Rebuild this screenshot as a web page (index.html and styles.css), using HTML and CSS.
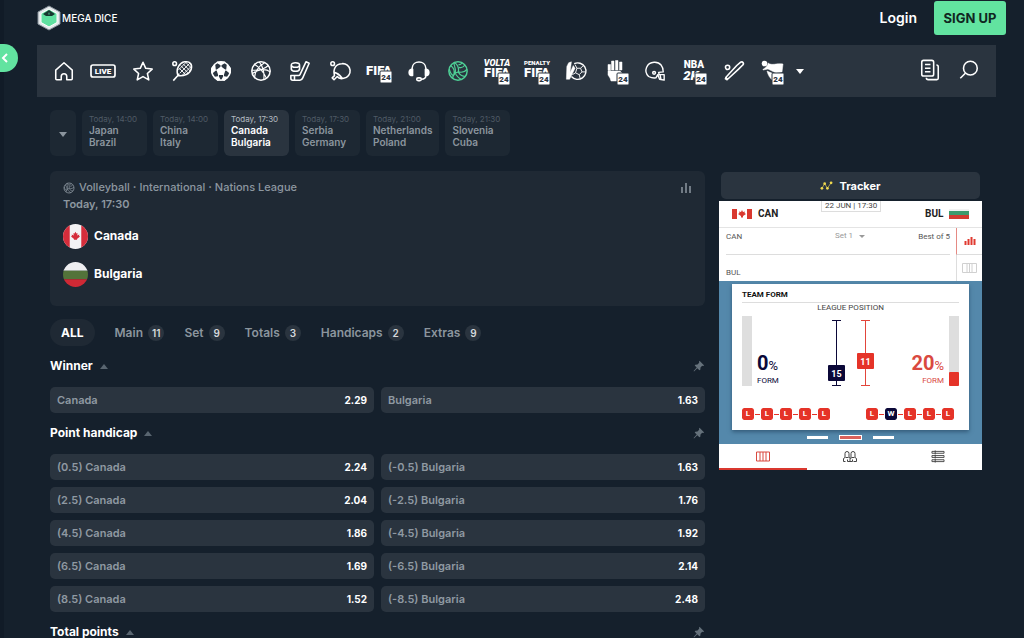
FILE: index.html
```html
<!DOCTYPE html>
<html lang="en">
<head>
<meta charset="utf-8">
<meta name="viewport" content="width=device-width, initial-scale=1">
<title>Mega Dice</title>
<link rel="stylesheet" href="styles.css">
</head>
<body>
<svg class="defs" aria-hidden="true">
  <symbol id="pin" viewBox="0 0 12 12"><path d="M6.500.8 11.200 5.500 10 6 9.200 5.800 7.500 7.500 7.300 9.800 6.400 10.300 4.300 8.200 1 11.500.6 11 3.700 7.600 1.700 5.600 2.300 4.800 4.500 4.500 6.200 2.800 6 1.800Z" fill="currentColor"/></symbol>
  <symbol id="volley" viewBox="0 0 24 24"><g fill="none" stroke="currentColor" stroke-width="1.300"><circle cx="12" cy="12" r="10" stroke-width="1.600"/><path d="M12.500 13C13 8 12 5 8 2.800M12.500 13c4 1 7.500-.5 9.500-3M12.500 13c-4 1-6 3.500-6.500 7.300M4 6c3 2 4.500 6 3.500 10.500M8 2.800c-1 1 0 2 .5 4.700 1 3 1 5 .5 7.500M13 8c3 1 5 0 6.500-2.500M12.500 5C14 5.500 15.500 4.500 16.500 3M9.500 15.500c2 3 4 5 6.500 6M12.500 13.500c2 3 4.500 4.500 7.500 4.500M2.500 10c1 4 2 6 4.500 7"/></g></symbol>
</svg>

<button class="drawer" aria-label="Open sidebar"><svg viewBox="0 0 10 12"><path d="M7 2 3 6l4 4" fill="none" stroke="#fff" stroke-width="2"/></svg></button>

<header class="top">
  <a class="brand" href="#" aria-label="Mega Dice">
    <svg viewBox="0 0 24 26"><path d="M12 1 23 7v12l-11 6L1 19V7Z" fill="#e4e8eb" stroke="#87919a"/><path d="m12 4 8 4.500v9L12 22l-8-4.500v-9Z" fill="#5fe0a0" stroke="#fff"/><path d="m12 5 6 4-3 2H9L6 9Z" fill="#17372f"/><path d="m12 7 1 2-1 1-1-1Z" fill="#3c8e70"/></svg>
    <span>MEGA DICE</span>
  </a>
  <a class="login" href="#">Login</a>
  <button class="signup">SIGN UP</button>
</header>

<nav class="sports" aria-label="Sports">
  <ul>
    <li><a href="#" aria-label="Home"><svg viewBox="0 0 24 24"><path d="M3 11 12 3l9 8v9.500q0 1-1 1h-5V18a3 3 0 0 0-6 0v3.500H4q-1 0-1-1Z"/></svg></a></li>
    <li><a href="#" aria-label="Live"><svg class="wide" viewBox="0 0 26 16"><rect x="1" y="2" width="24" height="12" rx="2"/><text x="13" y="11" class="t-live">LIVE</text></svg></a></li>
    <li><a href="#" aria-label="Favourites"><svg viewBox="0 0 24 24"><path d="m12 2.500 3 6.600 7 .8-5.200 4.800 1.500 7-6.300-3.600-6.300 3.600 1.500-7L2 9.900l7-.8Z"/></svg></a></li>
    <li><a href="#" aria-label="Tennis"><svg viewBox="0 0 24 24"><path d="M7.500 17C5 10 9 3 15 2c6-1 8.500 3 7 8s-8 8-14.500 7ZM7.500 17l-5 5.500M7.500 15l1.500 2"/><path stroke-width="1" d="m9 9 7 7M10.500 6 18.500 14M13 4l8 8M16 2.500l6 6M12 17 22 7M9.500 14.500 20.500 3.500M8 11l9-9"/><circle cx="4" cy="4" r="2"/></svg></a></li>
    <li><a href="#" aria-label="Football"><svg viewBox="0 0 24 24"><circle cx="12" cy="12" r="10"/><path fill="currentColor" d="m12 8 4 3-1.500 4.500h-5L8 11ZM8 2.500h8L12 5ZM2 9l3-3 .5 5L2 14ZM22 9l-3-3-.5 5 3.500 3ZM5 19l4-.5 1.500 3-2 .5ZM19 19l-4-.5-1.500 3 2 .5Z"/><path stroke-width="1" d="M12 8V5M16 11l2.500 0M8 11H5.500M9.500 15.500l-.5 3M14.500 15.500l.5 3"/></svg></a></li>
    <li><a href="#" aria-label="Basketball"><svg viewBox="0 0 24 24"><circle cx="12" cy="12" r="10"/><path stroke-width="1.200" d="M2 11c8 1 15-2 18-5M10 2c4 4 6 12 5 19.500M16 3C10 6 5 13 5 19M2.500 15C9 10 17 9 22 13M5 5c4 2 10 8 13 15"/></svg></a></li>
    <li><a href="#" aria-label="Ice hockey"><svg viewBox="0 0 24 24"><path d="m18.500 2 3.500 1.500-7 16q-1 2.500-3 2.500H4q-2 0-2-2v-3h8.500q1 0 1.500-1ZM6 17v5"/><ellipse cx="7" cy="5.500" rx="4.500" ry="2.500"/><path d="M2.500 6v4c1 3 8 3 9 0V6"/></svg></a></li>
    <li><a href="#" aria-label="Table tennis"><svg viewBox="0 0 24 24"><path d="M6 17C4 9 8 4 14 4a8 8 0 0 1 2 16c-4 1-6-.5-7-2l-3.500 3.500-2-2L6 17ZM5.500 13.500c5 1 7 4 9 6.500"/><circle cx="4" cy="4" r="2"/></svg></a></li>
    <li><a href="#" aria-label="FIFA 24"><svg class="txt" viewBox="0 0 28 28"><text x="14" y="18" class="t-big">FIFA</text><rect class="tag" x="15" y="14" width="12" height="12" rx="1"/><text x="21" y="23" class="t-24">24</text></svg></a></li>
    <li><a href="#" aria-label="Esports"><svg viewBox="0 0 24 24"><path d="M4.500 11V9C5 0 19 0 19.500 9v2M19.500 17c0 3-2 4-5 4"/><path fill="currentColor" d="M5 10v7c-5 0-5-7 0-7ZM19 10v7c5 0 5-7 0-7Z"/><rect x="9.500" y="19.500" width="5" height="3" rx="1.500"/></svg></a></li>
    <li><a class="current" href="#" aria-label="Volleyball" aria-current="page"><svg viewBox="0 0 24 24"><use href="#volley"/></svg></a></li>
    <li><a href="#" aria-label="Volta FIFA 24"><svg class="txt" viewBox="0 0 28 28"><text x="14" y="9" class="t-small slant">VOLTA</text><text x="14" y="20" class="t-big">FIFA</text><rect class="tag" x="15" y="16" width="12" height="12" rx="1"/><text x="21" y="25" class="t-24">24</text></svg></a></li>
    <li><a href="#" aria-label="Penalty FIFA 24"><svg class="txt" viewBox="0 0 28 28"><text x="14" y="8" class="t-tiny">PENALTY</text><text x="14" y="20" class="t-big">FIFA</text><rect class="tag" x="15" y="16" width="12" height="12" rx="1"/><text x="21" y="25" class="t-24">24</text></svg></a></li>
    <li><a href="#" aria-label="Futsal"><svg viewBox="0 0 24 24"><path stroke-width="1.500" d="M10 4a9 9 0 1 1-3 14"/><path stroke-width="1" d="m13 9 4 0 1.500 4-3 3-4-2ZM13 9l-2-4M17 9l3-3M18.500 13H22M15.500 16l1 4M11.500 14 8 16"/><path fill="currentColor" stroke-width=".5" d="M2 7 1.500 21H5L11 9 9 6 5.500 14 7 2 4 3Z"/></svg></a></li>
    <li><a href="#" aria-label="Combat 24"><svg class="txt" viewBox="0 0 28 28"><path fill="currentColor" d="M6 7.500h2.500v6H6ZM9.500 4H12v9H9.500ZM13.500 3.500H16V13h-2.500ZM17.500 5H20v8h-2.500ZM6 14h12l2 2v4l-4 4H9l-1-3-2-3Z" stroke-width=".5"/><rect class="tag" x="15" y="16" width="12" height="12" rx="1"/><text x="21" y="25" class="t-24">24</text></svg></a></li>
    <li><a href="#" aria-label="American football"><svg viewBox="0 0 24 24"><path stroke-width="1.500" d="M5 18C-1 12 3 3 11 2.500c7-.5 10 5 10 10.500l-5 .5.500 2.500h5.500v6l-5-1-2-5-2 3.500c-3 .5-5 0-8-1.500ZM17.500 16l1 5"/><circle cx="11" cy="14" r="1.500"/></svg></a></li>
    <li><a href="#" aria-label="NBA 2K24"><svg class="txt" viewBox="0 0 28 28"><text x="14" y="11" class="t-nba">NBA</text><text x="11" y="23" class="t-big slant">2K</text><rect class="tag" x="15" y="16" width="12" height="12" rx="1"/><text x="21" y="25" class="t-24">24</text></svg></a></li>
    <li><a href="#" aria-label="Baseball"><svg viewBox="0 0 24 24"><path d="m3 19 12-13 4-3.500q2-1 3 .500 1 1.500-1 3l-4 4L5 21ZM2 20l3 2"/><circle cx="5" cy="8" r="2.300"/></svg></a></li>
    <li><a href="#" aria-label="eCricket 24"><svg class="txt" viewBox="0 0 28 28"><path fill="currentColor" stroke-width=".5" d="M9 6c4 3 8 0 15 1l-1 8-6 1-8-4-5 1c0-2 3-1 5-6ZM8 14l7 3v7c-4-2-6-6-7-10Z"/><circle fill="currentColor" cx="5.500" cy="6.500" r="2"/><rect class="tag" x="13" y="16" width="12" height="12" rx="1"/><text x="19" y="25" class="t-24">24</text></svg></a></li>
  </ul>
  <button class="more" aria-label="More sports"><i class="down"></i></button>
  <button class="tool" aria-label="Bet slips"><svg viewBox="0 0 24 24"><rect x="3" y="1.500" width="13" height="17" rx="2"/><path d="M6.500 6h6M6.500 10h6M6.500 14h6M19 6.500q2 0 2 2V21q0 1.500-1.500 1.500H10q-2 0-2-2"/></svg></button>
  <button class="tool" aria-label="Search"><svg viewBox="0 0 24 24"><circle cx="13.500" cy="10" r="7.500"/><path d="M8 15.500 2.500 21"/></svg></button>
</nav>

<main class="page">
  <nav class="matches" aria-label="Matches">
    <button class="match pick" aria-label="Choose league"><i class="down"></i></button>
    <a class="match" href="#"><small>Today, 14:00</small>Japan<br>Brazil</a>
    <a class="match" href="#"><small>Today, 14:00</small>China<br>Italy</a>
    <a class="match active" href="#"><small>Today, 17:30</small>Canada<br>Bulgaria</a>
    <a class="match" href="#"><small>Today, 17:30</small>Serbia<br>Germany</a>
    <a class="match" href="#"><small>Today, 21:00</small>Netherlands<br>Poland</a>
    <a class="match" href="#"><small>Today, 21:30</small>Slovenia<br>Cuba</a>
  </nav>

  <div class="columns">
    <div class="event">
      <section class="card">
        <div class="crumbs"><svg viewBox="0 0 24 24"><use href="#volley"/></svg><a href="#">Volleyball</a><b>·</b><a href="#">International</a><b>·</b><a href="#">Nations League</a>
          <button aria-label="Statistics"><svg viewBox="0 0 12 12"><path d="M2 5v6M6 1v10M10 4v7" stroke="currentColor" stroke-width="1.500"/></svg></button></div>
        <p class="when">Today, 17:30</p>
        <div class="team"><svg viewBox="0 0 26 26"><clipPath id="disc"><circle cx="13" cy="13" r="13"/></clipPath><g clip-path="url(#disc)"><path fill="#f3f3f5" d="M0 0h26v26H0z"/><path fill="#d52d3b" d="M0 0h7v26H0zM19 0h7v26h-7zM13 8l1 2 1.200-.500-.4 2.500 2.200-1-.3 1.500 1 .500-3.200 2.500.2 1h-3.400l.2-1L8.300 13l1-.500L9 11l2.200 1-.4-2.500L12 10Z"/></g></svg><h2>Canada</h2></div>
        <div class="team"><svg viewBox="0 0 26 26"><g clip-path="url(#disc)"><path fill="#eeeef1" d="M0 0h26v9H0z"/><path fill="#53733a" d="M0 9h26v9H0z"/><path fill="#cf2935" d="M0 18h26v8H0z"/></g></svg><h2>Bulgaria</h2></div>
      </section>

      <div class="tabs">
        <button class="all">ALL</button>
        <button>Main<span>11</span></button>
        <button>Set<span>9</span></button>
        <button>Totals<span>3</span></button>
        <button>Handicaps<span>2</span></button>
        <button>Extras<span>9</span></button>
      </div>

      <section class="market">
        <header><button class="fold">Winner<i class="up"></i></button><button class="pin" aria-label="Pin Winner"><svg><use href="#pin"/></svg></button></header>
        <div class="odds">
          <button><span>Canada</span><b>2.29</b></button><button><span>Bulgaria</span><b>1.63</b></button>
        </div>
      </section>
      <section class="market">
        <header><button class="fold">Point handicap<i class="up"></i></button><button class="pin" aria-label="Pin Point handicap"><svg><use href="#pin"/></svg></button></header>
        <div class="odds">
          <button><span>(0.5) Canada</span><b>2.24</b></button><button><span>(-0.5) Bulgaria</span><b>1.63</b></button>
          <button><span>(2.5) Canada</span><b>2.04</b></button><button><span>(-2.5) Bulgaria</span><b>1.76</b></button>
          <button><span>(4.5) Canada</span><b>1.86</b></button><button><span>(-4.5) Bulgaria</span><b>1.92</b></button>
          <button><span>(6.5) Canada</span><b>1.69</b></button><button><span>(-6.5) Bulgaria</span><b>2.14</b></button>
          <button><span>(8.5) Canada</span><b>1.52</b></button><button><span>(-8.5) Bulgaria</span><b>2.48</b></button>
        </div>
      </section>
      <section class="market">
        <header><button class="fold">Total points<i class="up"></i></button><button class="pin" aria-label="Pin Total points"><svg><use href="#pin"/></svg></button></header>
      </section>
    </div>

    <aside class="tracker">
      <h3><svg viewBox="0 0 14 12"><path d="m2 9 3-5 3 5 4-6" fill="none" stroke="#b8a94a"/><g fill="#f0d94f"><circle cx="2" cy="9" r="1.500"/><circle cx="5" cy="4" r="1.500"/><circle cx="8" cy="9" r="1.500"/><circle cx="12" cy="3" r="1.500"/></g></svg>Tracker</h3>
      <div class="widget">
        <div class="score">
          <svg viewBox="0 0 20 10"><path fill="#fff" d="M0 0h20v10H0z"/><path fill="#d9382f" d="M0 0h5v10H0zM15 0h5v10h-5zM10 1l1 2 2-.500-.5 1.500 1.500 1-3 2v1.500H9V7L6 5l1.500-1L7 2.500 9 3Z"/></svg>
          <strong>CAN</strong><time>22 JUN | 17:30</time><strong>BUL</strong>
          <svg viewBox="0 0 20 10"><path fill="#f2f2f2" d="M0 0h20v3H0z"/><path fill="#3d9b6d" d="M0 2h20v5H0z"/><path fill="#d23c31" d="M0 6h20v4H0z"/></svg>
        </div>
        <div class="sets">
          <div class="set-row first"><span>CAN</span><button class="set">Set 1<i class="down"></i></button><span class="best">Best of 5</span></div>
          <div class="set-row second"><span>BUL</span></div>
          <button class="side on" aria-label="Charts"><svg viewBox="0 0 12 10"><path d="M1.500 5v4M4.500 3v6M7.500 1v8M10.500 3v6" stroke="#e03a30" stroke-width="2"/></svg></button>
          <button class="side" aria-label="Court"><svg class="court" viewBox="0 0 15 10"><path d="M.5.5h14v9H.5zM5 .5v9M7.500.5v9M10 .5v9" fill="none" stroke="#d0d0d0"/></svg></button>
        </div>
        <div class="stage">
          <div class="form-card">
            <h4>TEAM FORM</h4>
            <p>LEAGUE POSITION</p>
            <div class="form">
              <div class="meter"></div>
              <div class="pct navy"><span><b>0</b>%</span><small>FORM</small></div>
              <svg class="position" viewBox="0 0 48 66"><g stroke="#0b0838" fill="none"><path d="M5 .5h9M5 65.500h9M9.500 0v66"/></g><rect x="1" y="45" width="17" height="16" rx="1" fill="#0b0838"/><text x="9.500" y="57">15</text><g stroke="#e2453b" fill="none"><path d="M34 .5h9M34 65.500h9M38.500 0v66"/></g><rect x="30" y="33" width="17" height="16" rx="1" fill="#e53328"/><text x="38.500" y="45">11</text></svg>
              <div class="pct red"><span><b>20</b>%</span><small>FORM</small></div>
              <div class="meter"><i style="height:20%"></i></div>
            </div>
            <div class="results">
              <ol><li>L</li><li>L</li><li>L</li><li>L</li><li>L</li></ol>
              <ol><li>L</li><li class="win">W</li><li>L</li><li>L</li><li>L</li></ol>
            </div>
          </div>
          <div class="dots"><button aria-label="Slide 1"></button><button class="on" aria-label="Slide 2"></button><button aria-label="Slide 3"></button></div>
        </div>
        <div class="views">
          <button class="on" aria-label="Court view"><svg viewBox="0 0 14 12"><path d="M.5 1.500h13v9H.5zM4 1.500v9M7 1.500v9M10 1.500v9" fill="none" stroke="currentColor"/></svg></button>
          <button aria-label="Head to head"><svg viewBox="0 0 14 12"><path d="M.5 11V8L2 7V3q0-2 2-2t2 2v4l2 1V3q0-2 2-2t2 2v4l1.500 1v3h-3M.5 11h2M4.500 11h5M2.500 7h3M8.500 7h3M7 8v3M4.500 9v2M9.500 9v2" fill="none" stroke="currentColor"/></svg></button>
          <button aria-label="Statistics view"><svg viewBox="0 0 14 14"><path d="M.5 1.500h13v2H.5zM.5 6h13v2H.5zM.5 10.500h13v2H.5zM4 .5v4M4 5v4M4 9.500v4" fill="none" stroke="currentColor"/></svg></button>
        </div>
      </div>
    </aside>
  </div>
</main>
</body>
</html>
```
FILE: styles.css
```css
* { box-sizing: border-box; }
body { margin: 0; background: #15202c; color: #fff; font: 600 11px/16px Inter, "Noto Sans", sans-serif; border-left: 4px solid #111b27; overflow-x: hidden; }
h2, h3, h4, p, ul, ol { margin: 0; padding: 0; }
ul, ol { list-style: none; }
button { font: inherit; color: inherit; background: none; border: 0; padding: 0; cursor: pointer; }
a { color: inherit; text-decoration: none; }
.defs { display: none; }
.down { display: inline-block; border: 4px solid transparent; border-top: 5px solid; border-bottom: 0; }
.up { display: inline-block; border: 4px solid transparent; border-bottom: 5px solid #596570; border-top: 0; }

.drawer { position: absolute; left: 0; top: 44px; width: 18px; height: 28px; border-radius: 0 14px 14px 0; background: #62e3a0; display: flex; align-items: center; }
.drawer svg { width: 10px; height: 12px; }

.top { display: flex; align-items: center; height: 45px; padding: 0 18px 9px 33px; }
.brand { display: flex; align-items: center; gap: 1px; margin-right: auto; font-weight: 500; }
.brand svg { width: 24px; height: 26px; }
.brand span { font-size: 10px; }
.login { font-size: 14px; margin-right: 17px; }
.signup { background: #62e3a0; color: #10261f; width: 72px; height: 34px; border-radius: 3px; font-size: 13px; font-weight: 700; }

.sports { display: flex; align-items: center; height: 52px; margin: 0 28px 0 33px; padding: 0 15px 0 7px; background: #2a343f; }
.sports ul { display: flex; flex: 0 1 749px; }
.sports li { flex: 1; display: flex; justify-content: center; }
.sports a { display: flex; align-items: center; justify-content: center; height: 28px; }
.sports svg { width: 22px; height: 22px; fill: none; stroke: currentColor; stroke-width: 1.7; stroke-linejoin: round; overflow: visible; }
.sports .wide { width: 26px; height: 16px; }
.sports .txt { width: 28px; height: 28px; }
.sports text { stroke: none; fill: #fff; text-anchor: middle; font-family: Roboto, sans-serif; font-weight: 900; }
.sports .t-live { font-size: 8px; }
.sports .t-big { font-size: 13px; }
.sports .t-small { font-size: 9px; }
.sports .t-tiny { font-size: 6px; }
.sports .t-nba { font-size: 10px; }
.sports .slant { font-style: italic; }
.sports .tag { fill: #fff; stroke: #2a343f; stroke-width: 1; }
.sports .t-24 { font-size: 8px; fill: #2a343f; }
.sports .current { color: #4ed096; }
.more { width: 14px; display: flex; justify-content: center; margin-right: auto; }
.tool { width: 24px; height: 24px; margin-left: 15px; }

.page { padding: 13px 42px 0 46px; }
.matches { display: flex; gap: 6px; margin-bottom: 15px; }
.match { height: 46px; padding: 4px 7px; border-radius: 6px; background: #1d2833; color: #8b959e; line-height: 12px; font-size: 10px; white-space: nowrap; }
.match small { display: block; height: 10px; font-size: 8px; line-height: 10px; font-weight: 400; color: #4f5a65; min-width: 51px; }
.match.active { background: #2a343f; color: #fff; }
.match.active small { color: #b4bbc1; }
.match.pick { width: 26px; padding: 0; }

.columns { display: grid; grid-template-columns: minmax(0, 1fr) 263px; gap: 14px; align-items: start; }
.card { background: #1f2934; border-radius: 6px; padding: 8px 13px 19px; color: #8d97a0; }
.crumbs { display: flex; align-items: center; gap: 3px; line-height: 17px; font-weight: 500; }
.crumbs > svg { width: 12px; height: 12px; margin-right: 1px; }
.crumbs button { margin-left: auto; height: 12px; }
.crumbs button svg { width: 12px; height: 12px; display: block; }
.when { line-height: 17px; margin-bottom: 10px; }
.team { display: flex; align-items: center; gap: 6px; color: #fff; height: 26px; }
.team + .team { margin-top: 12px; }
.team svg { width: 25px; height: 25px; }
.team h2 { font-size: 12px; font-weight: 700; }

.tabs { display: flex; align-items: center; gap: 20px; margin: 13px 0 11px; font-size: 12px; color: #8b959e; }
.tabs button { display: flex; align-items: center; gap: 5px; height: 27px; }
.tabs .all { background: #1f2934; color: #fff; border-radius: 14px; padding: 0 11px; font-weight: 700; }
.tabs span { min-width: 16px; height: 16px; padding: 0 4px; border-radius: 8px; background: #2a343f; color: #d5d9dc; font-size: 10px; line-height: 16px; text-align: center; }

.market { margin-bottom: 11px; }
.market header { display: flex; justify-content: space-between; align-items: center; height: 18px; margin-bottom: 12px; }
.fold { display: flex; align-items: center; gap: 7px; font-size: 12px; font-weight: 700; }
.pin { color: #65717b; height: 12px; }
.pin svg { width: 12px; height: 12px; display: block; }
.odds { display: grid; grid-template-columns: 1fr 1fr; gap: 7px; }
.odds button { display: flex; justify-content: space-between; align-items: center; height: 26px; padding: 0 7px; border-radius: 5px; background: #2a343f; }
.odds span { color: #8f99a2; }
.odds b { font-size: 10px; font-weight: 700; }

.tracker { padding-top: 1px; }
.tracker h3 { display: flex; justify-content: center; align-items: center; gap: 6px; height: 27px; margin: 0 2px 2px; border-radius: 5px; background: #2a343f; font-size: 11px; font-weight: 700; }
.tracker h3 svg { width: 13px; height: 11px; }
.widget { background: #fff; color: #222; font: 400 8px/10px Roboto, sans-serif; }
.score { display: grid; grid-template-columns: 20px 57px 1fr 18px 20px; column-gap: 6px; align-items: center; height: 27px; padding: 0 13px; border-bottom: 1px solid #e4e4e4; }
.score svg { width: 20px; height: 10px; }
.score strong { font-size: 10px; font-weight: 700; }
.score time { align-self: start; justify-self: start; border: 1px solid #ddd; border-top: 0; padding: 0 3px; white-space: nowrap; color: #444; }
.sets { display: grid; grid-template-columns: 1fr 26px; grid-template-rows: 27px 26px; }
.set-row { display: grid; grid-template-columns: 1fr auto 1fr; margin-left: 7px; color: #555; }
.first { border-bottom: 1px solid #ddd; padding-top: 3px; margin-right: 6px; align-items: start; }
.second { grid-row: 2; align-items: end; padding-bottom: 3px; }
.first > span { padding-top: 1px; }
.best { text-align: right; }
.set { display: flex; align-items: center; gap: 6px; color: #999; margin-left: 24px; }
.set .down { border-width: 3px 3px 0; }
.side { border-left: 1px solid #ddd; display: grid; place-items: center; }
.side.on { border-bottom: 1px solid #ddd; border-left-color: #e58a84; }
.side svg { width: 12px; height: 10px; }
.side .court { width: 15px; }
.stage { background: #5488ab; padding: 3px 13px 4px; }
.form-card { background: #fff; padding: 6px 10px 10px; height: 146px; box-shadow: 0 2px 4px #345c7a; display: flex; flex-direction: column; }
.form-card h4 { font-size: 8px; line-height: 10px; font-weight: 700; color: #111; border-bottom: 1px solid #ddd; padding-bottom: 2px; }
.form-card p { text-align: center; line-height: 9px; margin-bottom: 4px; color: #444; }
.form { display: flex; align-items: end; height: 70px; }
.meter { width: 10px; height: 70px; background: #dedede; display: flex; align-items: end; }
.meter i { width: 100%; background: #e53328; border-radius: 1px; }
.pct { flex: 1; margin: 0 5px; display: flex; flex-direction: column; font-size: 13px; line-height: 20px; }
.pct b { font-size: 20px; font-weight: 700; }
.pct small { font-size: 8px; line-height: 10px; }
.navy { color: #0b0838; }
.red { color: #d9493f; text-align: right; }
.position { width: 48px; height: 66px; }
.position text { fill: #fff; font-size: 9px; font-weight: 700; text-anchor: middle; }
.results { display: flex; justify-content: space-between; margin-top: auto; padding-right: 5px; }
.results ol { display: flex; gap: 7px; background: linear-gradient(#e53328, #e53328) center / 100% 1px no-repeat; }
.results li { width: 12px; height: 12px; border-radius: 2px; background: #e53328; color: #fff; font-weight: 700; line-height: 12px; text-align: center; outline: 1px solid #fff; }
.results .win { background: #0b0838; }
.dots { display: flex; justify-content: center; gap: 10px; padding-top: 5px; }
.dots button { width: 23px; height: 5px; border: 1px solid #5488ab; background: #fff; }
.dots .on { background: #d9615b; border-color: #fff; }
.views { display: grid; grid-template-columns: repeat(3, 1fr); height: 26px; color: #444; }
.views button { border-bottom: 2px solid transparent; display: grid; place-items: center; }
.views svg { width: 14px; height: 13px; }
.views .on { color: #d9493f; border-color: #d9382f; }
```
